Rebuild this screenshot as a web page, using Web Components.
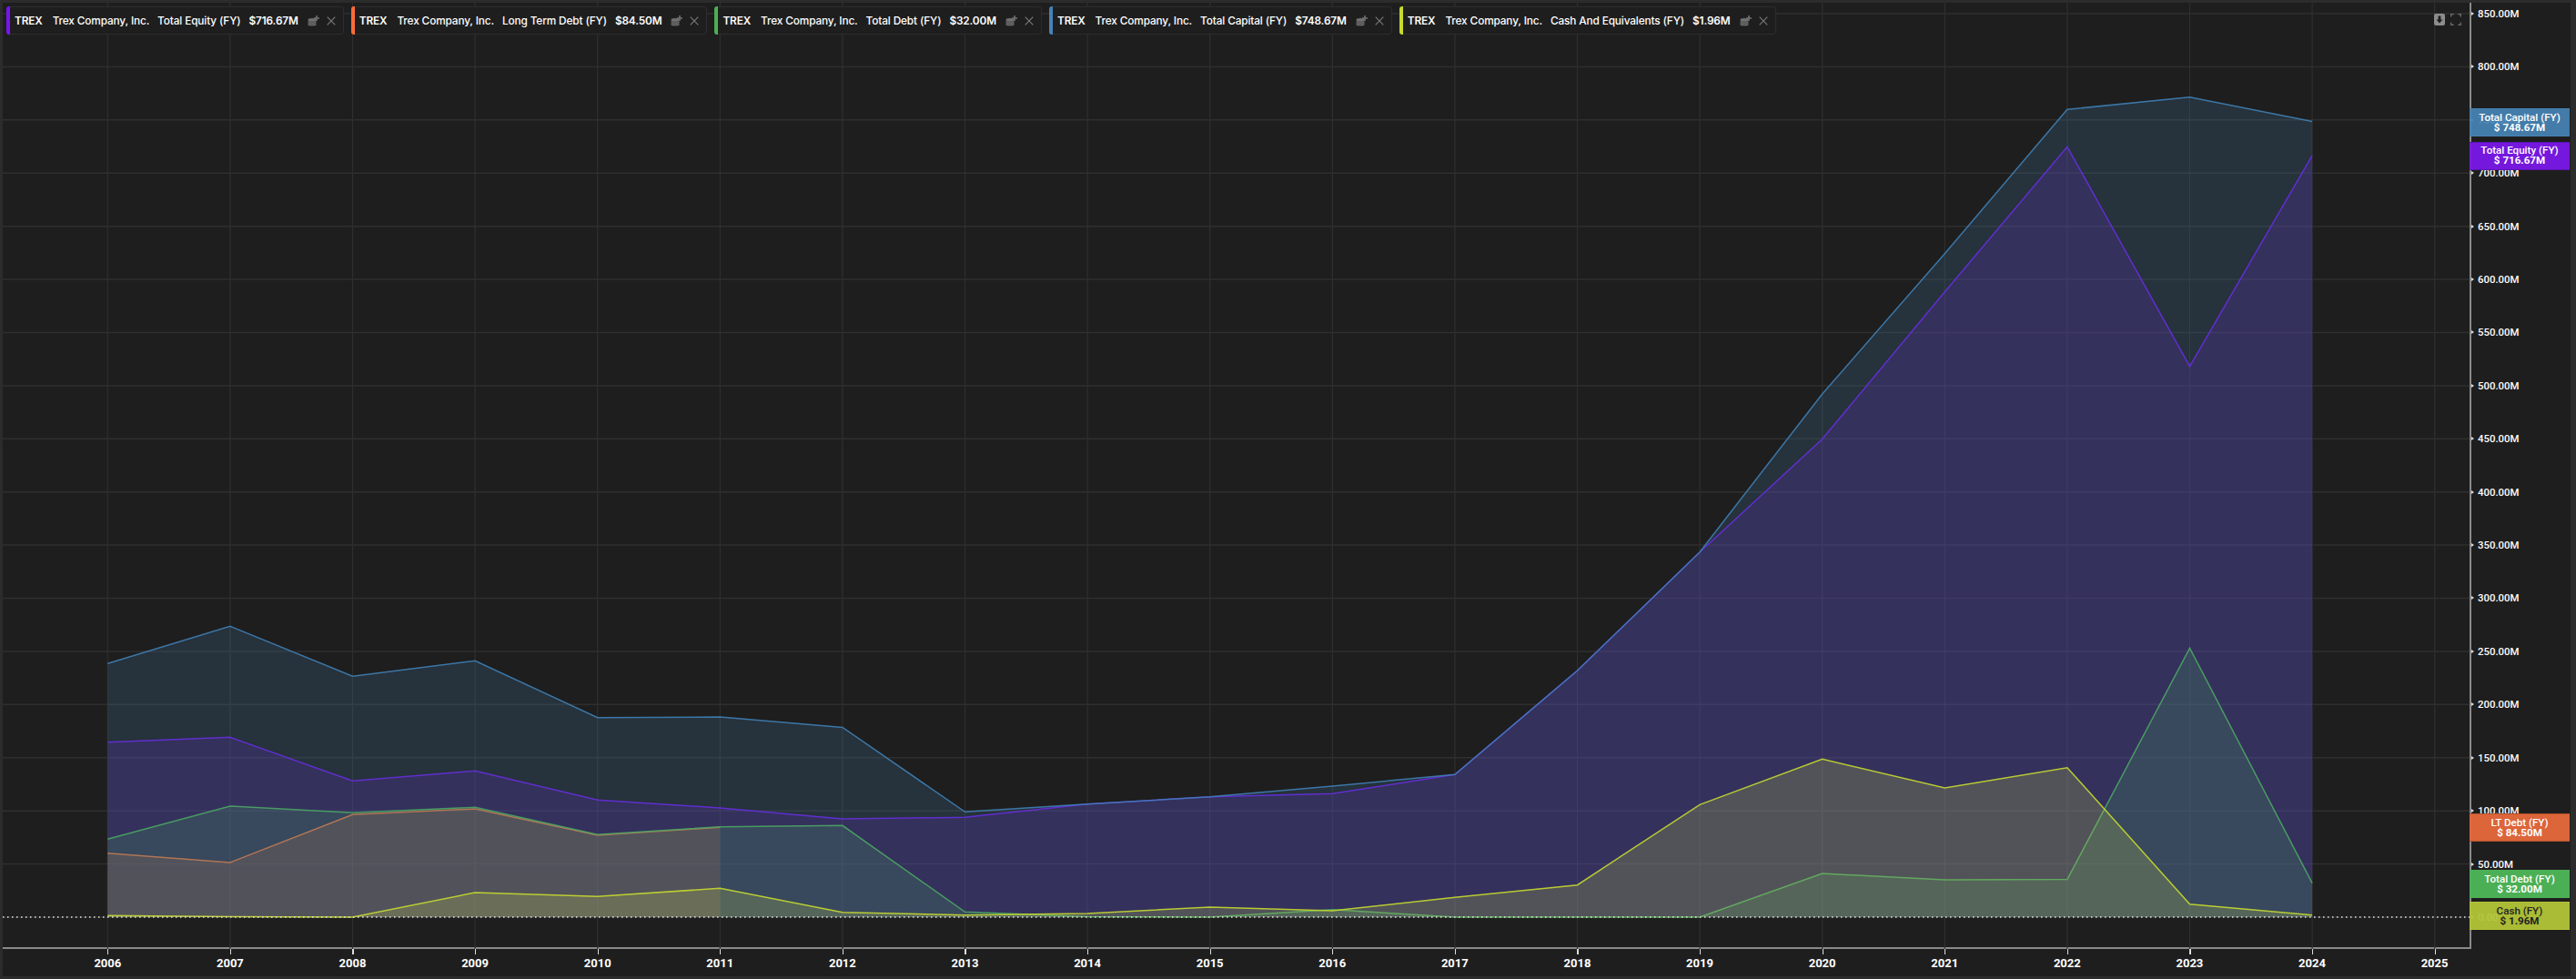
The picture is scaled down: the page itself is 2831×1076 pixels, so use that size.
<!DOCTYPE html>
<html>
<head>
<meta charset="utf-8">
<title>TREX</title>
<style>
html,body{margin:0;padding:0;background:#2c2c2c;overflow:hidden;}
</style>
</head>
<body>
<chart-frame>
  <series-chip slot="legend" color="#7a12f5" metric="Total Equity (FY)" value="$716.67M"></series-chip>
  <series-chip slot="legend" color="#ff6b35" metric="Long Term Debt (FY)" value="$84.50M"></series-chip>
  <series-chip slot="legend" color="#4caf50" metric="Total Debt (FY)" value="$32.00M"></series-chip>
  <series-chip slot="legend" color="#4682b4" metric="Total Capital (FY)" value="$748.67M"></series-chip>
  <series-chip slot="legend" color="#c6d92f" metric="Cash And Equivalents (FY)" value="$1.96M"></series-chip>

  <price-tag slot="tags" at="116" color="rgba(70,130,180,.93)" edge="#4682b4" label="Total Capital (FY)" value="$ 748.67M"></price-tag>
  <price-tag slot="tags" at="152.7" color="rgba(122,24,232,.95)" edge="#5f12b5" label="Total Equity (FY)" value="$ 716.67M"></price-tag>
  <price-tag slot="tags" at="891" color="rgba(224,103,58,.98)" edge="#b3522e" label="LT Debt (FY)" value="$ 84.50M"></price-tag>
  <price-tag slot="tags" at="953" color="rgba(76,178,87,.98)" edge="#4cb257" label="Total Debt (FY)" value="$ 32.00M"></price-tag>
  <price-tag slot="tags" at="988" color="rgba(178,196,55,.95)" edge="#b2c437" text="#222" label="Cash (FY)" value="$ 1.96M"></price-tag>
</chart-frame>

<script>
const SERIES = [
  {color:'#6f1ae8', fill:'#7a18e8', data:[164.6,169.2,128.1,137.6,110.2,102.7,92.4,93.9,106.4,113.2,116.2,134.1,232,343.5,449.7,588.2,724.8,518.1,716.67]},
  {color:'#ff6b35', fill:'#ff6b35', data:[60.2,51.4,96.5,101.9,77,84.5]},
  {color:'#4caf50', fill:'#4caf50', data:[73.4,104.4,98.2,103.3,77.6,85,86.2,4.9,.3,0,7.1,0,0,0,41.1,35.1,35.4,253.1,32]},
  {color:'#3f7fb5', fill:'#4682b4', data:[238.6,273.7,226.6,241.1,187.7,188.3,178.6,99,106.4,113.2,123.3,134.1,232,343.5,492.2,624.3,759.9,771.5,748.67]},
  {color:'#c6d92f', fill:'#cfdc50', data:[1.5,.3,0,23.1,19.4,27.1,4.5,2,3.4,9.4,6,18.6,30.2,105.9,148.7,121.6,140.6,12.2,1.96]}
];
const X0 = 118.3, XSTEP = 134.6, Y0 = 1008, YPX = 1.16824;
const px = i => X0 + XSTEP * i;
const py = v => Y0 - v * YPX;

const ChipTpl = document.createElement('template');
ChipTpl.innerHTML = `
<style>
:host{display:inline-flex;align-items:center;height:31px;box-sizing:border-box;background:#1e1e1e;
  border:1px solid #2d2d2d;border-left:0;border-radius:4px;color:#fff;
  font:500 11.8px Inter,"Liberation Sans",sans-serif;letter-spacing:-.12px;white-space:nowrap;}
.bar{width:4px;align-self:stretch;margin:-1px 0;border-radius:3px 0 0 3px;background:var(--c);}
.sym{margin-left:5px;font-weight:600;}
.co{margin-left:11px;}
.metric{margin-left:9px;}
.val{margin-left:9px;font-weight:600;}
svg{display:block;}
.add{margin-left:10px;width:13px;height:12px;}
.close{margin:1px 8px 0 8px;width:10px;height:10px;}
</style>
<span class="bar"></span>
<span class="sym">TREX</span>
<span class="co">Trex Company, Inc.</span>
<span class="metric"></span>
<span class="val"></span>
<svg class="add" viewBox="0 0 13 12">
  <g fill="#717171" stroke="#1e1e1e" stroke-width=".5">
    <ellipse cx="5" cy="9.4" rx="4.8" ry="2.2"/>
    <ellipse cx="5" cy="7.2" rx="4.8" ry="2.2"/>
    <ellipse cx="5" cy="5" rx="4.8" ry="2.2"/>
  </g>
  <path fill="#717171" d="M9.2 0h1.6v2.2H13v1.5h-2.2V6H9.2V3.7H7V2.2h2.2z"/>
</svg>
<svg class="close" viewBox="0 0 10 10"><path fill="none" stroke="#7c7c7c" stroke-width="1.1" d="M.7.7l8.6 8.6M9.3.7.7 9.3"/></svg>`;

class SeriesChip extends HTMLElement{
  constructor(){
    super();
    this.attachShadow({mode:'open'});
    this.shadowRoot.appendChild(ChipTpl.content.cloneNode(true));
  }
  connectedCallback(){
    this.style.setProperty('--c', this.getAttribute('color'));
    this.shadowRoot.querySelector('.metric').textContent = this.getAttribute('metric');
    this.shadowRoot.querySelector('.val').textContent = this.getAttribute('value');
  }
}
customElements.define('series-chip', SeriesChip);

const TagTpl = document.createElement('template');
TagTpl.innerHTML = `
<style>
:host{position:absolute;left:0;width:110px;height:31px;box-sizing:border-box;display:flex;flex-direction:column;
  align-items:center;justify-content:center;font:500 11.6px/11px Roboto,"Liberation Sans",sans-serif;color:#fff;
  border-top:1px solid transparent;border-bottom:1px solid transparent;}
b{font-weight:700;}
</style>
<span class="l"></span><b class="v"></b>`;

class PriceTag extends HTMLElement{
  constructor(){
    super();
    this.attachShadow({mode:'open'});
    this.shadowRoot.appendChild(TagTpl.content.cloneNode(true));
  }
  connectedCallback(){
    this.style.top = this.getAttribute('at') + 'px';
    this.style.background = this.getAttribute('color');
    this.style.borderColor = this.getAttribute('edge');
    if(this.getAttribute('text')) this.style.color = this.getAttribute('text');
    this.shadowRoot.querySelector('.l').textContent = this.getAttribute('label');
    this.shadowRoot.querySelector('.v').textContent = this.getAttribute('value');
  }
}
customElements.define('price-tag', PriceTag);

const PlotTpl = document.createElement('template');
PlotTpl.innerHTML = `
<style>
:host{display:block;position:relative;width:2712px;height:1040px;}
svg.plot{display:block;position:absolute;left:0;top:0;}
.legend{position:absolute;left:4px;top:4px;display:flex;gap:8px;}
.tools{position:absolute;right:10px;top:12px;display:flex;gap:6px;align-items:center;}
.tools svg{display:block;width:12px;height:13px;}
</style>
<svg class="plot" width="2712" height="1040" viewBox="3 3 2712 1040"></svg>
<div class="legend"><slot name="legend"></slot></div>
<div class="tools">
  <svg viewBox="0 0 12 13"><rect width="12" height="13" rx="2" fill="#8c8c8c"/><path fill="#1e1e1e" d="M4.6 2.5h2.8v4h2L6 10.4 2.6 6.5h2z"/></svg>
  <svg viewBox="0 0 12 13"><path fill="none" stroke="#6e6e6e" stroke-width="1.3" d="M.7 3.6V.7h3M8.3.7h3v2.9M11.3 9.4v2.9h-3M3.7 12.3h-3V9.4"/></svg>
</div>`;

class PlotArea extends HTMLElement{
  constructor(){
    super();
    this.attachShadow({mode:'open'});
    this.shadowRoot.appendChild(PlotTpl.content.cloneNode(true));
    let s = '';
    for(let v = 0; v <= 850; v += 50){
      s += `<line x1="3" x2="2715" y1="${py(v)}" y2="${py(v)}" stroke="#2f2f2f" stroke-width="1.5"/>`;
    }
    for(let i = 0; i < 20; i++){
      s += `<line x1="${px(i)}" x2="${px(i)}" y1="3" y2="1043" stroke="#2f2f2f" stroke-width="1.2"/>`;
    }
    SERIES.forEach(ser => {
      const pts = ser.data.map((v,i) => px(i).toFixed(1) + ',' + py(v).toFixed(1));
      const last = ser.data.length - 1;
      s += `<polygon points="${px(0)},${Y0} ${pts.join(' ')} ${px(last)},${Y0}" fill="${ser.fill}" fill-opacity=".2"/>`;
      s += `<polyline points="${pts.join(' ')}" fill="none" stroke="${ser.color}" stroke-width="1.5" stroke-opacity=".9"/>`;
    });
    s += `<line x1="3" x2="2715" y1="${Y0}" y2="${Y0}" stroke="#e6e6e6" stroke-width="1.5" stroke-dasharray="1.5 3.5"/>`;
    this.shadowRoot.querySelector('svg.plot').innerHTML = s;
  }
}
customElements.define('plot-area', PlotArea);

const TimeTpl = document.createElement('template');
TimeTpl.innerHTML = `
<style>
:host{display:grid;grid-template-columns:repeat(20,134.6px);padding-left:48px;height:30px;
  font:700 13px Roboto,"Liberation Sans",sans-serif;color:#fff;}
div{position:relative;text-align:center;line-height:31px;}
div::before{content:"";position:absolute;left:50%;top:0;width:1.2px;height:6px;background:#ddd;}
</style>`;

class TimeAxis extends HTMLElement{
  constructor(){
    super();
    this.attachShadow({mode:'open'});
    this.shadowRoot.appendChild(TimeTpl.content.cloneNode(true));
    for(let y = 2006; y <= 2025; y++){
      const d = document.createElement('div');
      d.textContent = y;
      this.shadowRoot.appendChild(d);
    }
  }
}
customElements.define('time-axis', TimeAxis);

const PriceTpl = document.createElement('template');
PriceTpl.innerHTML = `
<style>
:host{display:block;position:relative;width:110px;height:1040px;box-sizing:border-box;padding-top:12px;
  border-left:2px solid #8a8a8a;margin-left:-1px;color:#fff;font:500 11.4px Roboto,"Liberation Sans",sans-serif;}
.t{height:58.41px;line-height:0;padding-left:7px;position:relative;}
.t::before{content:"";position:absolute;left:0;top:-2px;border-left:3px solid #ddd;border-top:2px solid transparent;border-bottom:2px solid transparent;}
.tags{position:absolute;left:-2px;top:0;}
</style>
<div class="ticks"></div>
<div class="tags"><slot></slot></div>`;

class PriceAxis extends HTMLElement{
  constructor(){
    super();
    this.attachShadow({mode:'open'});
    this.shadowRoot.appendChild(PriceTpl.content.cloneNode(true));
    const box = this.shadowRoot.querySelector('.ticks');
    for(let v = 850; v >= 0; v -= 50){
      const d = document.createElement('div');
      d.className = 't';
      d.textContent = v ? v + '.00M' : '0.00';
      box.appendChild(d);
    }
  }
}
customElements.define('price-axis', PriceAxis);

const FrameTpl = document.createElement('template');
FrameTpl.innerHTML = `
<style>
:host{display:block;width:2831px;height:1076px;box-sizing:border-box;padding:3px 6px 3px 3px;}
.pane{display:flex;height:100%;background:#1e1e1e;}
.main{width:2712px;display:flex;flex-direction:column;}
.base{border-top:2px solid #8a8a8a;margin-top:-1px;}
</style>
<div class="pane">
  <div class="main">
    <plot-area><slot name="legend" slot="legend"></slot></plot-area>
    <div class="base"><time-axis></time-axis></div>
  </div>
  <price-axis><slot name="tags"></slot></price-axis>
</div>`;

class ChartFrame extends HTMLElement{
  constructor(){
    super();
    this.attachShadow({mode:'open'});
    this.shadowRoot.appendChild(FrameTpl.content.cloneNode(true));
  }
}
customElements.define('chart-frame', ChartFrame);
</script>
</body>
</html>
